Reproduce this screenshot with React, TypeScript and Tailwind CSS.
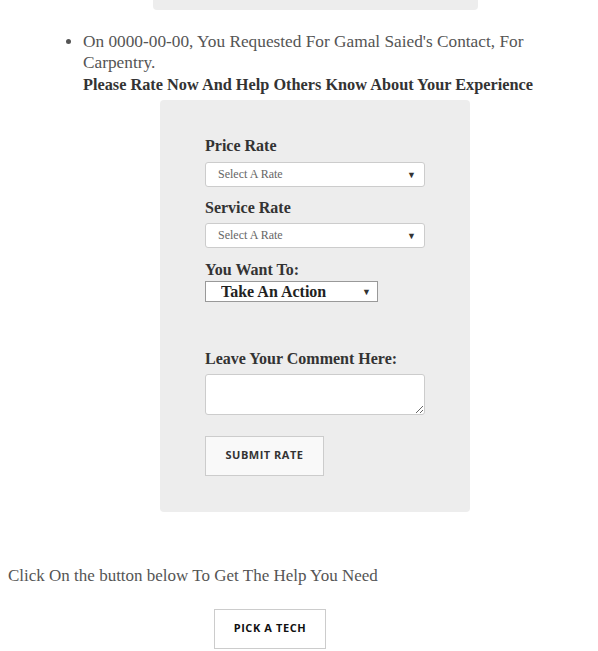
import React from "react";

const serif = { fontFamily: '"Liberation Serif", "DejaVu Serif", serif' };
const sans = { fontFamily: '"Open Sans", "Liberation Sans", sans-serif' };

function Arrow({ right }: { right: string }) {
  return (
    <span className={`pointer-events-none absolute top-1/2 -translate-y-1/2 text-[9px] leading-none text-[#333] ${right}`}>
      ▼
    </span>
  );
}

function RateSelect() {
  return (
    <div className="relative w-[220px]">
      <select className="block h-[25px] w-full appearance-none rounded-[3px] border border-[#ccc] bg-white pl-[12px] text-[12px] text-[#666] outline-none">
        <option>Select A Rate</option>
        <option>1</option>
        <option>2</option>
        <option>3</option>
        <option>4</option>
        <option>5</option>
      </select>
      <Arrow right="right-[9px]" />
    </div>
  );
}

export default function App() {
  return (
    <div className="min-h-[651px] w-[598px] bg-white text-[#555]" style={serif}>
      <div className="mx-auto h-[10px] w-[325px] translate-x-[16px] rounded-b-[4px] bg-[#ededed]" />

      <ul className="mt-[21px] ml-[43px] w-[504px] list-disc pl-[40px]">
        <li className="text-[17.3px] leading-[21px]">
          On 0000-00-00, You Requested For Gamal Saied's Contact, For Carpentry.
          <div className="mt-px text-[16.3px] font-bold leading-[22px] text-[#333]">
            Please Rate Now And Help Others Know About Your Experience
          </div>
          <form
            onSubmit={(e) => e.preventDefault()}
            className="mx-auto mt-[4px] w-[310px] rounded-[4px] bg-[#ededed] pt-[34px] pr-[45px] pb-[36px] pl-[45px] text-[16px]"
          >
            <label className="block font-bold leading-[24px] text-[#333]">Price Rate</label>
            <div className="mt-[4px]">
              <RateSelect />
            </div>

            <label className="mt-[9px] block font-bold leading-[24px] text-[#333]">Service Rate</label>
            <div className="mt-[3px]">
              <RateSelect />
            </div>

            <label className="mt-[10px] block font-bold leading-[24px] text-[#333]">You Want To:</label>
            <div className="relative -mt-px w-[173px]">
              <select className="block h-[21px] w-full appearance-none border border-[#999] bg-white pl-[15px] text-[16px] leading-[19px] font-bold text-[#222] outline-none">
                <option>Take An Action</option>
                <option>Recommend</option>
                <option>Report</option>
              </select>
              <Arrow right="right-[7px]" />
            </div>

            <label className="mt-[45px] block font-bold leading-[24px] text-[#333]">Leave Your Comment Here:</label>
            <textarea className="mt-[3px] block h-[41px] w-[220px] rounded-[3px] border border-[#ccc] bg-white outline-none" />

            <button
              type="submit"
              className="mt-[21px] block h-[40px] w-[119px] border border-[#ccc] bg-[#f9f9f9] pb-[3px] text-[11px] font-bold tracking-[0.5px] text-[#333]"
              style={sans}
            >
              SUBMIT RATE
            </button>
          </form>
        </li>
      </ul>

      <p className="mt-[53px] pl-[8px] text-[17px] leading-[22px]">Click On the button below To Get The Help You Need</p>

      <div className="mt-[22px] flex pl-[214px]">
        <button
          type="button"
          className="h-[40px] w-[112px] border border-[#ccc] bg-white pb-[2px] text-[11px] font-bold tracking-[0.6px] text-[#111]"
          style={sans}
        >
          PICK A TECH
        </button>
      </div>
    </div>
  );
}
